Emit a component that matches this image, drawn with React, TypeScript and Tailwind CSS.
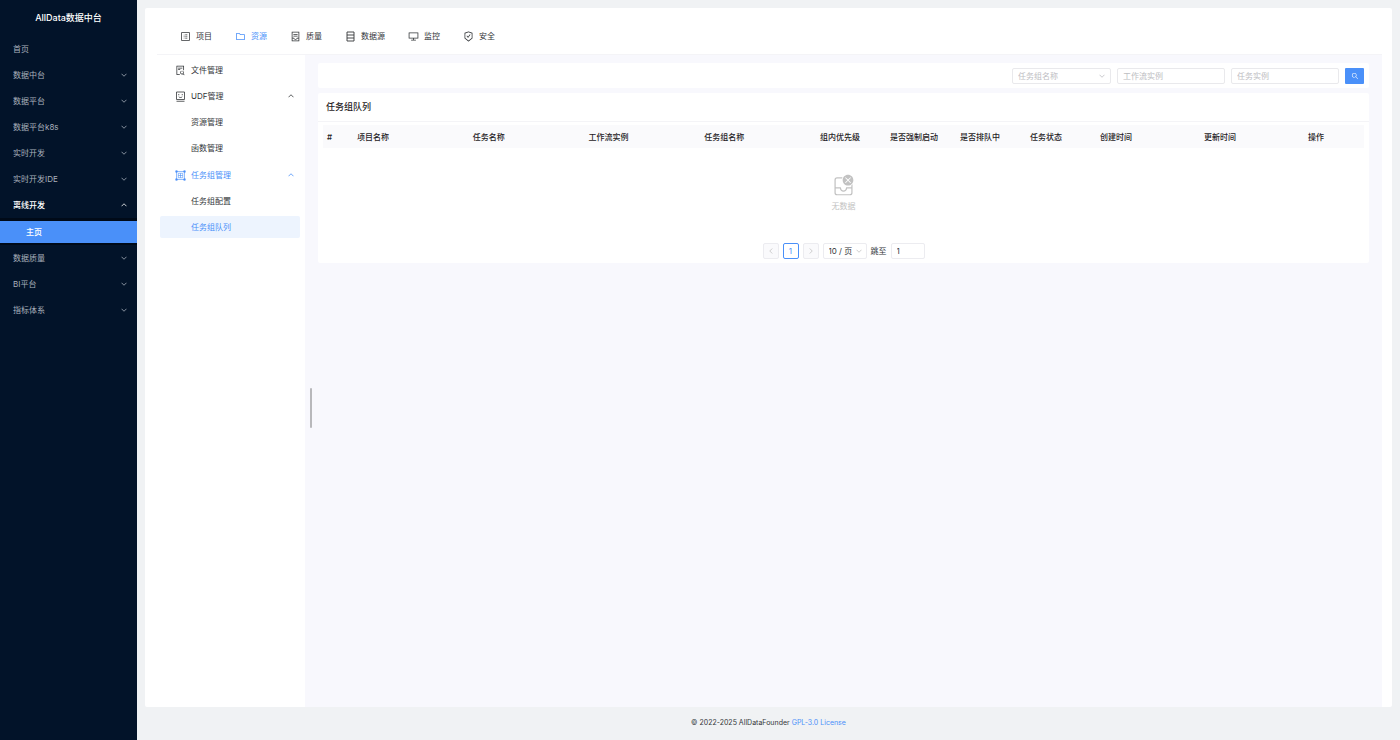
import React from 'react';
import {
  AiOutlineContainer,
  AiOutlineDesktop,
  AiOutlineFileSearch,
  AiOutlineFolder,
  AiOutlineProfile,
  AiOutlineSafetyCertificate,
  AiOutlineSearch,
} from 'react-icons/ai';

type IconProps = { className?: string };

// server rack with three shelves
const RackIcon: React.FC<IconProps> = ({ className }) => (
  <svg className={className} viewBox="0 0 22 22" fill="none" stroke="currentColor" strokeWidth="1.8" aria-hidden="true">
    <path d="M4 2h14v18H4ZM4 8h14M4 14h14" />
  </svg>
);

// face in a box, standing on a base line
const RobotIcon: React.FC<IconProps> = ({ className }) => (
  <svg className={className} viewBox="0 0 22 22" fill="none" stroke="currentColor" strokeWidth="1.6" aria-hidden="true">
    <path d="M3 2h16v15H3ZM3 20.5h16" />
    <path d="M7.500 6v2.500M14.500 6v2.500M7.500 11.500c1.500 2 5.500 2 7 0" />
  </svg>
);

// frame with corner nodes around a small grid
const TaskGroupIcon: React.FC<IconProps> = ({ className }) => (
  <svg className={className} viewBox="0 0 22 22" fill="none" stroke="currentColor" strokeWidth="1.2" aria-hidden="true">
    <path d="M3 3h16v16H3Z" />
    <path d="M6.500 6.500h9v9h-9ZM11 6.500v9M6.500 11h9" />
    <path d="M1.500 1.500h3v3h-3ZM17.500 1.500h3v3h-3ZM1.500 17.500h3v3h-3ZM17.500 17.500h3v3h-3Z" fill="currentColor" />
  </svg>
);

const PLATFORM_MENU = [
  { label: '首页', leaf: true },
  { label: '数据中台' },
  { label: '数据平台' },
  { label: '数据平台k8s' },
  { label: '实时开发' },
  { label: '实时开发IDE' },
  { label: '离线开发', children: ['主页'] },
  { label: '数据质量' },
  { label: 'BI平台' },
  { label: '指标体系' },
];

const TOP_NAV = [
  { label: '项目', icon: AiOutlineProfile },
  { label: '资源', icon: AiOutlineFolder, active: true },
  { label: '质量', icon: AiOutlineContainer },
  { label: '数据源', icon: RackIcon },
  { label: '监控', icon: AiOutlineDesktop },
  { label: '安全', icon: AiOutlineSafetyCertificate },
];

const RESOURCE_MENU = [
  { label: '文件管理', icon: AiOutlineFileSearch, children: [] },
  { label: 'UDF管理', icon: RobotIcon, children: ['资源管理', '函数管理'] },
  { label: '任务组管理', icon: TaskGroupIcon, active: true, children: ['任务组配置', '任务组队列'] },
];

const COLUMNS = [
  { title: '#', width: 'w-[30px]' },
  { title: '项目名称', width: '' },
  { title: '任务名称', width: '' },
  { title: '工作流实例', width: '' },
  { title: '任务组名称', width: '' },
  { title: '组内优先级', width: 'w-[70px]' },
  { title: '是否强制启动', width: 'w-[70px]' },
  { title: '是否排队中', width: 'w-[70px]' },
  { title: '任务状态', width: 'w-[70px]' },
  { title: '创建时间', width: 'w-[104px]' },
  { title: '更新时间', width: 'w-[104px]' },
  { title: '操作', width: 'w-[60px]' },
];

const Chevron: React.FC<IconProps> = ({ className = '' }) => (
  <svg className={`w-[6px] h-[6px] ${className}`} viewBox="0 0 12 12" fill="none" stroke="currentColor" strokeWidth="1.6" aria-hidden="true">
    <path d="M1 3.5 6 8.5 11 3.5" />
  </svg>
);

const Sidebar: React.FC = () => (
  <aside className="w-[137px] shrink-0 bg-[#021329] text-[#a9b1bc]">
    <h1 className="h-[35px] flex items-center justify-center text-[9px] font-medium text-white">AllData数据中台</h1>
    <ul className="pt-px">
      {PLATFORM_MENU.map((item) => (
        <li key={item.label}>
          <button className={`w-full h-[26px] pl-[13px] pr-[10px] flex items-center justify-between ${item.children ? 'text-white font-medium' : ''}`}>
            {item.label}
            {!item.leaf && <Chevron className={item.children ? 'rotate-180' : ''} />}
          </button>
          {item.children && (
            <ul className="bg-[#000a18] pt-px">
              {item.children.map((child) => (
                <li key={child} className="py-[2px]">
                  <a href="#/home" className="h-[22px] pl-[26px] flex items-center bg-[#4a90f9] text-white font-medium">
                    {child}
                  </a>
                </li>
              ))}
            </ul>
          )}
        </li>
      ))}
    </ul>
  </aside>
);

const TopNav: React.FC = () => (
  <nav className="h-[47px] pl-[23px] pt-[10px] flex items-center gap-[23px] border-b border-[#f4f4f7]">
    {TOP_NAV.map(({ label, icon: Icon, active }) => (
      <a key={label} href="#/" className={`flex items-center gap-[5px] ${active ? 'text-[#4a90f9]' : ''}`}>
        <Icon className="w-[11px] h-[11px]" />
        {label}
      </a>
    ))}
  </nav>
);

const ResourceMenu: React.FC = () => (
  <aside className="w-[148px] shrink-0 pt-[2px]">
    <ul>
      {RESOURCE_MENU.map(({ label, icon: Icon, active, children }) => (
        <li key={label}>
          <button className={`w-full h-[26px] pl-[18px] pr-[11px] flex items-center gap-[5px] ${active ? 'text-[#4a90f9]' : ''}`}>
            <Icon className="w-[11px] h-[11px]" />
            {label}
            {children.length > 0 && <Chevron className="rotate-180 ml-auto" />}
          </button>
          {children.length > 0 && (
            <ul className="pb-px">
              {children.map((child) => (
                <li key={child} className="pl-[3px] pr-[5px] py-[2px]">
                  <a
                    href="#/resource"
                    className={`h-[22px] pl-[31px] flex items-center rounded-[2px] ${child === '任务组队列' ? 'bg-[#edf4fe] text-[#4a90f9]' : ''}`}
                  >
                    {child}
                  </a>
                </li>
              ))}
            </ul>
          )}
        </li>
      ))}
    </ul>
  </aside>
);

const SearchBar: React.FC = () => (
  <form className="h-[25px] px-[5px] flex items-center justify-end gap-[6px] bg-white rounded-[2px]">
    <div className="relative w-[99px]">
      <select
        aria-label="任务组名称"
        className="block w-full h-[16px] pl-[5px] appearance-none border border-[#e9e9ec] rounded-[2px] bg-white text-[#bdbdc2]"
      >
        <option>任务组名称</option>
      </select>
      <Chevron className="absolute right-[6px] top-[5px] text-[#bdbdc2] pointer-events-none" />
    </div>
    <input
      aria-label="工作流实例"
      placeholder="工作流实例"
      className="w-[108px] h-[16px] px-[5px] border border-[#e9e9ec] rounded-[2px] placeholder:text-[#bdbdc2]"
    />
    <input
      aria-label="任务实例"
      placeholder="任务实例"
      className="w-[108px] h-[16px] px-[5px] border border-[#e9e9ec] rounded-[2px] placeholder:text-[#bdbdc2]"
    />
    <button type="button" aria-label="搜索" className="w-[19px] h-[16px] flex items-center justify-center rounded-[1px] bg-[#4a90f9] text-white">
      <AiOutlineSearch className="w-[8px] h-[8px]" />
    </button>
  </form>
);

const EmptyState: React.FC = () => (
  <div className="h-[93px] pb-[3px] flex flex-col items-center justify-center gap-[3px] text-[#c2c2c2]">
    <svg className="w-[23px] h-[23px]" viewBox="0 0 28 28" fill="currentColor" aria-hidden="true">
      <path d="M26 7.5C26 11.09 23.09 14 19.5 14S13 11.09 13 7.5 15.91 1 19.5 1 26 3.91 26 7.5ZM16.85 4.15a.5.5 0 0 0-.7.7L18.79 7.5l-2.64 2.65a.5.5 0 0 0 .7.7l2.65-2.64 2.65 2.64a.5.5 0 0 0 .7-.7L20.21 7.5l2.64-2.65a.5.5 0 0 0-.7-.7L19.5 6.79Z" />
      <path d="M25 22.75V12.6a7.5 7.5 0 0 1-1.5 1.25V16h-5.75a.75.75 0 0 0-.75.75c0 1.95-1.12 3.25-3 3.25s-3-1.3-3-3.25a.75.75 0 0 0-.75-.75H4.5V7.25c0-.97.78-1.75 1.75-1.75H12.27c.12-.52.3-1.03.54-1.5H6.25A3.25 3.25 0 0 0 3 7.25v15.5A3.25 3.25 0 0 0 6.25 26h15.5A3.25 3.25 0 0 0 25 22.75Zm-20.5 0V17.5h5.07c.35 2.21 1.94 4 4.43 4s4.08-1.79 4.43-4h5.07v5.25c0 .97-.78 1.75-1.75 1.75H6.25c-.97 0-1.75-.78-1.75-1.75Z" />
    </svg>
    <span>无数据</span>
  </div>
);

const Pagination: React.FC = () => (
  <div className="pt-[2px] pb-[4px] flex items-center justify-center gap-[4px]">
    <button aria-label="上一页" className="w-[16px] h-[16px] flex items-center justify-center border border-[#ececf0] rounded-[2px] bg-[#fafafc] text-[#c2c2c2]">
      <Chevron className="rotate-90" />
    </button>
    <button className="w-[16px] h-[16px] flex items-center justify-center border border-[#4a90f9] rounded-[2px] text-[#4a90f9]">1</button>
    <button aria-label="下一页" className="w-[16px] h-[16px] flex items-center justify-center border border-[#ececf0] rounded-[2px] bg-[#fafafc] text-[#c2c2c2]">
      <Chevron className="-rotate-90" />
    </button>
    <div className="relative w-[44px]">
      <select aria-label="每页条数" className="block w-full h-[16px] pl-[5px] appearance-none border border-[#ececf0] rounded-[2px] bg-white">
        <option>10 / 页</option>
      </select>
      <Chevron className="absolute right-[5px] top-[5px] text-[#c2c2c2] pointer-events-none" />
    </div>
    <label className="flex items-center gap-[4px]">
      跳至
      <input defaultValue="1" className="w-[34px] h-[16px] px-[5px] border border-[#ececf0] rounded-[2px]" />
    </label>
  </div>
);

const QueueCard: React.FC = () => (
  <section className="bg-white rounded-[2px]">
    <h2 className="h-[29px] px-[8px] flex items-center text-[9px] font-medium text-[#1f2225] border-b border-[#f4f4f7]">任务组队列</h2>
    <div className="px-[5px] pt-[3px]">
      <table className="w-full table-fixed">
        <thead>
          <tr className="h-[23px] bg-[#fafafc]">
            {COLUMNS.map((col) => (
              <th key={col.title} className={`px-[4px] text-left font-medium text-[#1f2225] whitespace-nowrap ${col.width}`}>
                {col.title}
              </th>
            ))}
          </tr>
        </thead>
        <tbody>
          <tr>
            <td colSpan={COLUMNS.length}>
              <EmptyState />
            </td>
          </tr>
        </tbody>
      </table>
    </div>
    <Pagination />
  </section>
);

const App: React.FC = () => {
  return (
    <div className="min-h-screen flex bg-[#f0f2f4] text-[8px] leading-[12px] text-[#333639] font-['Inter','Noto_Sans_CJK_SC',sans-serif]">
      <Sidebar />
      <div className="flex-1 min-w-0 px-[8px] pt-[8px] flex flex-col">
        <div className="flex-1 flex flex-col bg-white rounded-[2px] pl-[12px] pr-[10px]">
          <TopNav />
          <div className="flex-1 flex">
            <ResourceMenu />
            <main className="relative flex-1 min-w-0 px-[13px] pt-[8px] flex flex-col gap-[5px] bg-[#f8f8fd]">
              {/* drag handle of the side menu */}
              <div className="absolute left-[5px] top-[51%] w-[2px] h-[40px] rounded-full bg-[#b8b8bb]" />
              <SearchBar />
              <QueueCard />
            </main>
          </div>
        </div>
        <footer className="h-[33px] pb-[2px] flex items-center justify-center gap-[2px] text-[7px]">
          © 2022-2025 AllDataFounder
          <a href="#/license" className="text-[#4a90f9]">GPL-3.0 License</a>
        </footer>
      </div>
    </div>
  );
};

export default App;
